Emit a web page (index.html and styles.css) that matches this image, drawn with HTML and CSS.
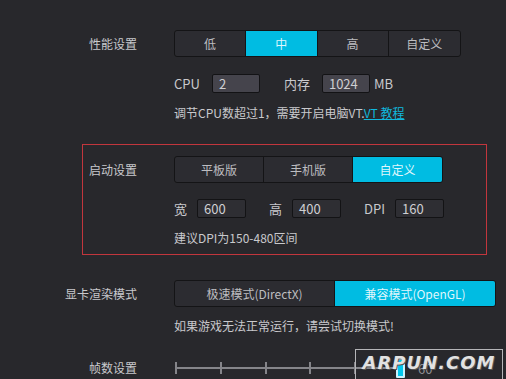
FILE: index.html
```html
<!DOCTYPE html>
<html lang="zh-CN">
<head>
<meta charset="UTF-8" />
<title>设置</title>
<link rel="stylesheet" href="styles.css">
</head>
<body>
  <div class="panel">

    <!-- 性能设置 -->
    <div class="row">
      <div class="label">性能设置</div>
      <div class="seg seg-perf">
        <span class="seg-btn">低</span>
        <span class="seg-btn active">中</span>
        <span class="seg-btn">高</span>
        <span class="seg-btn">自定义</span>
      </div>
    </div>
    <div class="fields fields-perf">
      <span class="fname">CPU</span>
      <span class="input light">2</span>
      <span class="fname gap-l">内存</span>
      <span class="input light">1024</span>
      <span class="fname unit">MB</span>
    </div>
    <p class="hint hint-perf">调节CPU数超过1，需要开启电脑VT.<a class="link">VT 教程</a></p>

    <!-- 启动设置 -->
    <div class="boot">
      <div class="row">
        <div class="label">启动设置</div>
        <div class="seg seg-boot">
          <span class="seg-btn">平板版</span>
          <span class="seg-btn">手机版</span>
          <span class="seg-btn active">自定义</span>
        </div>
      </div>
      <div class="fields fields-boot">
        <span class="fname">宽</span>
        <span class="input">600</span>
        <span class="fname gap-m">高</span>
        <span class="input">400</span>
        <span class="fname gap-m">DPI</span>
        <span class="input">160</span>
      </div>
      <p class="hint hint-boot">建议DPI为150-480区间</p>
    </div>

    <!-- 显卡渲染模式 -->
    <div class="row row-gpu">
      <div class="label">显卡渲染模式</div>
      <div class="seg seg-gpu">
        <span class="seg-btn">极速模式(DirectX)</span>
        <span class="seg-btn active">兼容模式(OpenGL)</span>
      </div>
    </div>
    <p class="hint hint-gpu">如果游戏无法正常运行，请尝试切换模式!</p>

    <!-- 帧数设置 -->
    <div class="row row-fps">
      <div class="label">帧数设置</div>
      <div class="slider">
        <div class="track">
          <i class="tick"></i><i class="tick"></i><i class="tick"></i><i class="tick"></i><i class="tick"></i><i class="tick"></i>
        </div>
        <span class="thumb"></span>
        <span class="value">60</span>
      </div>
    </div>
  </div>

  <div class="watermark">ARPUN.COM</div>
</body>
</html>
```

FILE: styles.css
```css
* {
  margin: 0; padding: 0; box-sizing: border-box;
}

html, body {
  width: 506px;
  height: 379px;
  overflow: hidden;
  background: #28282c;
  font-family: "Noto Sans CJK SC", "Noto Sans", sans-serif;
  font-size: 12px;
  color: #c9c9cc;
}

.panel {
  padding-top: 30px;
}

.row {
  display: flex;
  align-items: center;
}

.label {
  width: 137px;
  text-align: right;
  margin-right: 37px;
  line-height: 16px;
}

/* 分段按钮 */
.seg {
  display: flex;
  height: 27px;
  border: 1px solid #141416;
  border-radius: 3px;
  background: #2c2c31;
  overflow: hidden;
}
.seg-btn {
  display: flex;
  align-items: center;
  justify-content: center;
  color: #bdbdc0;
  border-right: 1px solid #141416;
}
.seg-btn:last-child {
  border-right: none;
}
.seg-btn.active {
  background: #00bce2;
  color: #dff6fc;
}
.seg-perf .seg-btn { width: 72px; }
.seg-perf { width: 287px; }
.seg-boot .seg-btn { width: 90px; }
.seg-boot { width: 269px; }
.seg-gpu .seg-btn { width: 161px; }
.seg-gpu { width: 322px; }

/* 输入框 */
.fields {
  display: flex;
  align-items: center;
  padding-left: 174px;
  height: 19px;
}
.fname {
  font-size: 13px;
  margin-right: 12px;
}
.input {
  width: 48px;
  height: 19px;
  line-height: 17px;
  padding-left: 6px;
  font-size: 13px;
  color: #cfcfd2;
  background: #2e2e33;
  border: 1px solid #131315;
  border-radius: 2px;
}
.input.light {
  background: #45444c;
}
.gap-l { margin-left: 24px; }
.unit { margin-left: 4px; }

.fields-perf { margin-top: 17px; }

.hint {
  padding-left: 174px;
  line-height: 16px;
}
.hint-perf { margin-top: 12px; }
.link {
  color: #10b8de;
  text-decoration: underline;
}

/* 启动设置红框 */
.boot {
  margin: 23px 0 0 82px;
  width: 405px;
  height: 111px;
  border: 1px solid #c2363d;
  padding-top: 11px;
}
.boot .label { width: 54px; }
.boot .fields,
.boot .hint { padding-left: 91px; }
.fields-boot { margin-top: 16px; }
.fields-boot .fname { margin-right: 10px; }
.fields-boot .input { width: 49px; }
.gap-m { margin-left: 23px; }
.hint-boot { margin-top: 12px; }

.row-gpu { margin-top: 25px; }
.hint-gpu { margin-top: 11px; }

/* 帧数滑块 */
.row-fps { margin-top: 26px; }
.slider {
  position: relative;
  width: 280px;
  height: 16px;
  display: flex;
  align-items: center;
}
.track {
  width: 226px;
  height: 2px;
  background: #85858a;
  margin-left: 1px;
  display: flex;
  justify-content: space-between;
  align-items: center;
}
.tick {
  width: 2px;
  height: 12px;
  background: #85858a;
}
.thumb {
  position: absolute;
  left: 222px;
  top: -2px;
  width: 9px;
  height: 20px;
  background: #00c8ee;
  border: 2px solid #c8f4ff;
  border-radius: 1px;
}
.value {
  margin-left: 17px;
  font-size: 13px;
  color: #8e8e92;
}

/* 水印 */
.watermark {
  position: absolute;
  left: 355px;
  top: 349px;
  width: 148px;
  height: 34px;
  border: 1px solid #b5b5b8;
  color: #e2e2e2;
  font-family: "DejaVu Sans", sans-serif;
  font-weight: bold;
  font-style: italic;
  font-size: 18px;
  letter-spacing: 1px;
  text-align: center;
  line-height: 26px;
  text-shadow: 1px 1px 0 #555;
}
```
